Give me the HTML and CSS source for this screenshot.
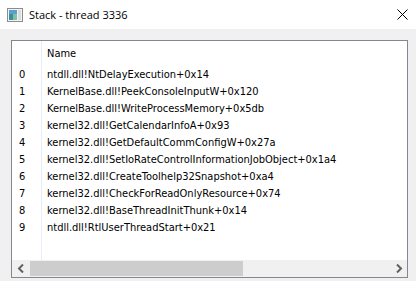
FILE: index.html
```html
<!DOCTYPE html>
<html>
<head>
<meta charset="utf-8">
<link rel="stylesheet" href="styles.css">
</head>
<body>
<div class="window">
  <div class="titlebar">
    <svg class="appicon" width="16" height="14" viewBox="0 0 16 14">
      <rect x="0.5" y="0.5" width="15" height="13" fill="#f4f4f4" stroke="#8c8c8c"/>
      <rect x="2" y="2" width="8" height="10" fill="#3c8c9c"/>
      <rect x="2" y="2" width="8" height="4" fill="#5a9fd0"/>
      <rect x="6" y="6" width="4" height="6" fill="#7fc0a0"/>
      <rect x="11" y="2" width="3" height="10" fill="#dcdcdc"/>
    </svg>
    <span class="title">Stack - thread 3336</span>
    <svg class="close" width="11" height="11" viewBox="0 0 11 11">
      <path d="M0.5 0.5 L10.5 10.5 M10.5 0.5 L0.5 10.5" stroke="#000" stroke-width="1"/>
    </svg>
  </div>
  <div class="content">
    <div class="listbox">
      <div class="listarea">
        <div class="row header"><span class="idx"></span><span class="name">Name</span></div>
        <div class="row"><span class="idx">0</span><span class="name">ntdll.dll!NtDelayExecution+0x14</span></div>
        <div class="row"><span class="idx">1</span><span class="name">KernelBase.dll!PeekConsoleInputW+0x120</span></div>
        <div class="row"><span class="idx">2</span><span class="name">KernelBase.dll!WriteProcessMemory+0x5db</span></div>
        <div class="row"><span class="idx">3</span><span class="name">kernel32.dll!GetCalendarInfoA+0x93</span></div>
        <div class="row"><span class="idx">4</span><span class="name">kernel32.dll!GetDefaultCommConfigW+0x27a</span></div>
        <div class="row"><span class="idx">5</span><span class="name">kernel32.dll!SetIoRateControlInformationJobObject+0x1a4</span></div>
        <div class="row"><span class="idx">6</span><span class="name">kernel32.dll!CreateToolhelp32Snapshot+0xa4</span></div>
        <div class="row"><span class="idx">7</span><span class="name">kernel32.dll!CheckForReadOnlyResource+0x74</span></div>
        <div class="row"><span class="idx">8</span><span class="name">kernel32.dll!BaseThreadInitThunk+0x14</span></div>
        <div class="row"><span class="idx">9</span><span class="name">ntdll.dll!RtlUserThreadStart+0x21</span></div>
        <div class="filler"><span class="idx"></span><span class="name"></span></div>
      </div>
      <div class="hscroll">
        <div class="arrow">
          <svg width="8" height="9" viewBox="0 0 8 9"><path d="M6 0.5 L2 4.5 L6 8.5" fill="none" stroke="#606060" stroke-width="2"/></svg>
        </div>
        <div class="thumb"></div>
        <div class="track"></div>
        <div class="arrow">
          <svg width="8" height="9" viewBox="0 0 8 9"><path d="M2 0.5 L6 4.5 L2 8.5" fill="none" stroke="#606060" stroke-width="2"/></svg>
        </div>
      </div>
    </div>
  </div>
</div>
</body>
</html>
```

FILE: styles.css
```css
html, body {
  margin: 0;
  padding: 0;
  background: #f0f0f0;
}
.window {
  width: 416px;
  height: 281px;
  display: flex;
  flex-direction: column;
  overflow: hidden;
}
.titlebar {
  height: 29px;
  background: #ffffff;
  display: flex;
  align-items: center;
  flex: none;
}
.appicon {
  margin-left: 7px;
  margin-top: 1px;
}
.title {
  margin-left: 6px;
  font-family: "Open Sans", "DejaVu Sans", sans-serif;
  font-size: 11px;
  color: #000;
  flex: 1;
}
.close {
  margin-right: 8px;
}
.content {
  flex: 1;
  padding: 11px 8px 3px 11px;
  display: flex;
}
.listbox {
  flex: 1;
  border: 1px solid #828790;
  background: #fff;
  display: flex;
  flex-direction: column;
}
.listarea {
  flex: 1;
  display: flex;
  flex-direction: column;
  font-family: "DejaVu Sans Condensed", "DejaVu Sans", sans-serif;
  font-stretch: condensed;
  font-size: 11px;
  color: #000;
}
.row {
  height: 17px;
  display: flex;
  align-items: center;
}
.row.header {
  height: 25px;
}
.idx {
  width: 30px;
  box-sizing: border-box;
  padding-left: 7px;
  align-self: stretch;
  display: flex;
  align-items: center;
  border-right: 1px solid #e8eef7;
  flex: none;
}
.name {
  padding-left: 5px;
  white-space: nowrap;
}
.filler {
  flex: 1;
  display: flex;
}
.hscroll {
  height: 17px;
  display: flex;
  background: #f0f0f0;
  flex: none;
}
.arrow {
  width: 17px;
  display: flex;
  align-items: center;
  justify-content: center;
  flex: none;
}
.thumb {
  width: 213px;
  background: #cdcdcd;
  margin-left: 1px;
  margin-top: 1px;
  margin-bottom: 1px;
}
.track {
  flex: 1;
}
```
